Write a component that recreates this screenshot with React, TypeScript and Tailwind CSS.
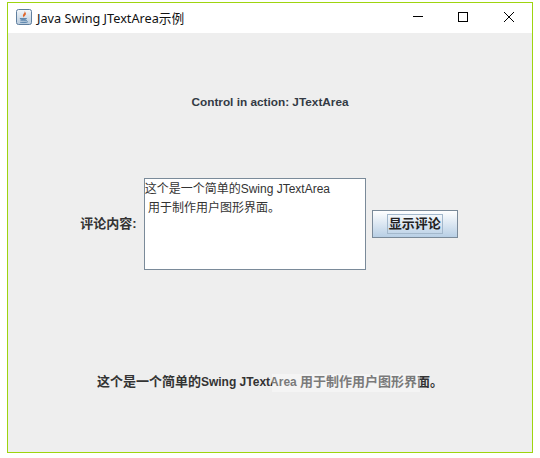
function JavaIcon() {
  return (
    <svg width="16" height="16" viewBox="0 0 16 16" className="shrink-0">
      <defs>
        <linearGradient id="jbg" x1="0" y1="0" x2="0" y2="1">
          <stop offset="0" stopColor="#f4f7fa" />
          <stop offset="1" stopColor="#b9cbdc" />
        </linearGradient>
      </defs>
      <rect x="0.5" y="0.5" width="15" height="15" rx="2" fill="url(#jbg)" stroke="#5f7f9f" />
      <path d="M8.500 2C9.500 4 6.500 5 7 7c.2.8.7 1.200 1 1.500C7.800 7 10.500 6 9.800 4.200 9.600 3.300 9 2.500 8.500 2z" fill="#e0662a" />
      <path d="M4 9.500h6.500c0 .6-1 1-3.200 1S4 10.100 4 9.500zM4.500 11.500c1.500.5 5 .5 6.500-.2M4 13.200c2 .6 6 .6 8-.5" fill="#4f7ba6" stroke="#4f7ba6" strokeWidth="0.7" />
    </svg>
  );
}

function TitleBar() {
  return (
    <div className="h-[30px] bg-white flex items-center shrink-0">
      <div className="ml-[8px] mr-[5px] mb-[2px]">
        <JavaIcon />
      </div>
      <span className="text-[12.700px] text-[#111] font-['Noto_Sans','Noto_Sans_CJK_SC',sans-serif] leading-none pt-px">
        Java Swing JTextArea示例
      </span>
      <div className="ml-auto flex items-center text-black">
        {/* window buttons */}
        <svg width="46" height="30" viewBox="0 0 46 30">
          <path d="M19 13.500h10" stroke="#000" strokeWidth="1" />
        </svg>
        <svg width="46" height="30" viewBox="0 0 46 30">
          <rect x="18.500" y="9.500" width="9" height="9" fill="none" stroke="#000" strokeWidth="1" />
        </svg>
        <svg width="46" height="30" viewBox="0 0 46 30">
          <path d="M18 9l10 10M28 9l-10 10" stroke="#000" strokeWidth="1" />
        </svg>
      </div>
    </div>
  );
}

function App() {
  return (
    <div className="w-[540px] h-[458px] bg-white pt-[2px] pl-[7px] font-['Liberation_Sans','Noto_Sans_CJK_SC',sans-serif]">
      <div className="w-[526px] h-[451px] border border-[#9ed40f] flex flex-col">
        <TitleBar />
        <div className="flex-1 bg-[#eeeeee] flex flex-col">
          <div className="flex-1 flex items-center justify-center pt-[2px] text-[11.800px] font-bold text-[#333a44]">
            Control in action: JTextArea
          </div>

          <div className="flex-1 flex justify-center pt-[7px] pr-[2px]">
            <div className="h-[92px] flex items-center text-[13px] font-bold text-[#333333] mr-[7px]">
              评论内容:
            </div>
            <div className="w-[222px] h-[92px] bg-white border border-[#7a8a99] pt-px text-[12px] leading-[19px] text-[#333333] whitespace-pre">
              {'这个是一个简单的Swing JTextArea\n 用于制作用户图形界面。'}
            </div>
            <div className="h-[92px] flex items-center ml-[6px]">
              <button className="w-[86px] h-[28px] border border-[#7a8a99] bg-linear-to-b from-white to-[#b8cfe5] flex items-center justify-center">
                <span className="border border-[#a3b8cc] px-px h-[20px] flex items-center text-[13px] font-bold text-[#222222]">
                  显示评论
                </span>
              </button>
            </div>
          </div>

          <div className="flex-1 flex items-center justify-center pb-[2px] text-[12px] font-bold text-[#333333] whitespace-pre relative">
            <span className="text-[13px]">这个是一个简单的</span>
            <span>Swing JTextArea </span>
            <span className="text-[13px]">用于制作用户图形界面。</span>
            <div className="absolute left-[264px] top-[60px] w-[148px] h-[18px] bg-white/35" />
          </div>
        </div>
      </div>
    </div>
  );
}

export default App;
